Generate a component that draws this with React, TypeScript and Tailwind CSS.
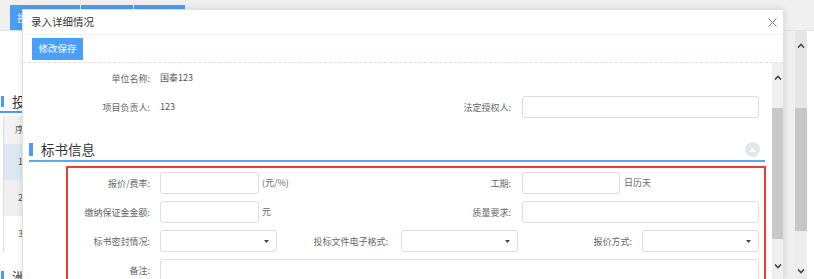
import React from 'react';

const Chevron = ({ up }: { up?: boolean }) => (
  <svg width="8" height="5" viewBox="0 0 8 5">
    <polyline
      points={up ? '1,4.5 4,1.5 7,4.5' : '1,0.5 4,3.5 7,0.5'}
      fill="none"
      stroke="#4a4a4a"
      strokeWidth="1.7"
    />
  </svg>
);

const Label = ({ className, children }: { className: string; children: React.ReactNode }) => (
  <div className={`shrink-0 text-right text-[9px] leading-none text-[#666] ${className}`}>{children}</div>
);

const TextInput = ({ className }: { className: string }) => (
  <div className={`shrink-0 h-[22px] rounded-[3px] border border-[#dcdcdc] bg-white ${className}`} />
);

const Select = ({ className }: { className: string }) => (
  <div className={`relative shrink-0 h-[22px] rounded-[3px] border border-[#dcdcdc] bg-white ${className}`}>
    {/* caret */}
    <svg className="absolute right-[7px] top-[9px]" width="5" height="3" viewBox="0 0 5 3">
      <polygon points="0,0 5,0 2.5,3" fill="#444" />
    </svg>
  </div>
);

const App = () => {
  return (
    <div className="relative w-[814px] h-[279px] overflow-hidden bg-white font-['Noto_Sans_CJK_SC','Noto_Sans',sans-serif]">
      {/* Background page */}
      <div className="flex h-full flex-col">
        <div className="flex h-[31px] shrink-0 items-end gap-[1px] border-b border-[#d5e4f3] bg-[#efefef] pl-[10px]">
          <div className="flex h-[25px] w-[70px] items-center bg-[#4a9cf4] pl-[7px] text-[10px] text-white">投标项目</div>
          <div className="h-[25px] w-[52px] bg-[#4a9cf4]" />
          <div className="h-[25px] w-[51px] bg-[#4a9cf4]" />
        </div>
        <div className="flex min-h-0 flex-1">
          <div className="flex-1 bg-white pt-[61px]">
            <div className="flex h-[21px] items-center border-b-2 border-[#4a9cf8]">
              <div className="ml-[1px] h-[11px] w-[3px] bg-[#4a9cf8]" />
              <span className="ml-[8px] text-[13.5px] text-[#333]">投标记录</span>
            </div>
            <div className="ml-[3px] mt-[3px] border-l border-[#dedede] text-[9px] text-[#555]">
              <div className="flex h-[28px] items-center bg-[#f2f2f2] pl-[11px]">序号</div>
              <div className="flex h-[36px] items-center bg-[#dde7f1] pl-[14px]">1</div>
              <div className="flex h-[36px] items-center bg-[#efefef] pl-[14px]">2</div>
              <div className="flex h-[36px] items-center bg-white pl-[14px]">3</div>
            </div>
            <div className="mt-[17px] flex h-[14px] items-center">
              <div className="ml-[1px] h-[11px] w-[3px] bg-[#4a9cf8]" />
              <span className="ml-[8px] text-[13.5px] text-[#333]">洲际</span>
            </div>
          </div>
          <div className="w-[11px] shrink-0 bg-[#efefef]" />
          {/* outer scrollbar */}
          <div className="flex w-[12px] shrink-0 flex-col bg-[#e6e6e6]">
            <div className="flex h-[28px] items-center justify-center">
              <Chevron up />
            </div>
            <div className="mt-[49px] h-[123px] bg-[#c6c6c6]" />
            <div className="flex-1 bg-[#ededed]" />
            <div className="flex h-[16px] items-center justify-center bg-[#ededed]">
              <Chevron />
            </div>
          </div>
          <div className="w-[7px] shrink-0 bg-white" />
        </div>
      </div>

      {/* Modal */}
      <div className="absolute left-[22px] top-[9px] flex h-[272px] w-[762px] flex-col border border-[#e0e0e0] bg-white shadow-[0_0_6px_rgba(0,0,0,0.12)]">
        <div className="flex h-[25px] shrink-0 items-center border-b border-[#f0f0f0] pl-[8px] pr-[6px]">
          <span className="text-[10.5px] text-[#333]">录入详细情况</span>
          <svg className="ml-auto" width="9" height="9" viewBox="0 0 9 9">
            <path d="M0.5 0.5 L8.5 8.5 M8.5 0.5 L0.5 8.5" stroke="#777" strokeWidth="1" />
          </svg>
        </div>
        <div className="flex h-[28px] shrink-0 items-center border-b border-dashed border-[#cfe1f3] pl-[9px]">
          <button className="flex h-[22px] w-[51px] items-center justify-center bg-[#4c9ff8] text-[9.5px] text-white">
            修改保存
          </button>
        </div>
        <div className="flex min-h-0 flex-1">
          <div className="min-w-0 flex-1 overflow-hidden pt-[4px]">
            <div className="flex h-[22px] items-center">
              <Label className="w-[127px]">单位名称:</Label>
              <span className="ml-[10px] text-[9px] text-[#555]">国泰123</span>
            </div>
            <div className="mt-[7px] flex h-[22px] items-center">
              <Label className="w-[127px]">项目负责人:</Label>
              <span className="ml-[10px] w-[240px] text-[9px] text-[#555]">123</span>
              <Label className="w-[111px]">法定授权人:</Label>
              <TextInput className="ml-[11px] w-[237px]" />
            </div>

            {/* section heading */}
            <div className="ml-[6px] mr-[7px] mt-[21px] flex h-[23px] items-center border-b-2 border-[#5ea6f5]">
              <div className="h-[13px] w-[4px] bg-[#4a9cf8]" />
              <span className="ml-[8px] text-[13.5px] text-[#333]">标书信息</span>
              <div className="ml-auto mr-[5px] flex h-[15px] w-[15px] items-center justify-center rounded-full bg-[#e1e5ec]">
                <svg width="7" height="4" viewBox="0 0 7 4">
                  <polygon points="0,4 7,4 3.5,0" fill="#fff" />
                </svg>
              </div>
            </div>

            <div className="ml-[43px] mr-[6px] mt-[4px] border-2 border-b-0 border-[#f03a3a] pt-[4px]">
              <div className="flex h-[22px] items-center">
                <div className="flex w-[332px] shrink-0 items-center">
                  <Label className="w-[82px]">报价/费率:</Label>
                  <TextInput className="ml-[10px] w-[99px]" />
                  <span className="ml-[3px] text-[9px] text-[#666]">(元/%)</span>
                </div>
                <Label className="w-[111px]">工期:</Label>
                <TextInput className="ml-[11px] w-[98px]" />
                <span className="ml-[4px] text-[9px] text-[#666]">日历天</span>
              </div>
              <div className="mt-[7px] flex h-[22px] items-center">
                <div className="flex w-[332px] shrink-0 items-center">
                  <Label className="w-[82px]">缴纳保证金金额:</Label>
                  <TextInput className="ml-[10px] w-[99px]" />
                  <span className="ml-[3px] text-[9px] text-[#666]">元</span>
                </div>
                <Label className="w-[111px]">质量要求:</Label>
                <TextInput className="ml-[11px] w-[237px]" />
              </div>
              <div className="mt-[7px] flex h-[22px] items-center">
                <Label className="w-[82px]">标书密封情况:</Label>
                <Select className="ml-[10px] w-[117px]" />
                <Label className="w-[111px]">投标文件电子格式:</Label>
                <Select className="ml-[13px] w-[117px]" />
                <Label className="w-[114px]">报价方式:</Label>
                <Select className="ml-[10px] w-[117px]" />
              </div>
              <div className="mt-[7px] flex items-start">
                <Label className="mt-[7px] w-[82px]">备注:</Label>
                <div className="ml-[10px] h-[40px] w-[599px] shrink-0 rounded-[3px] border border-[#dcdcdc]" />
              </div>
            </div>
          </div>
          {/* modal scrollbar */}
          <div className="flex w-[11px] shrink-0 flex-col bg-[#efefef]">
            <div className="flex h-[28px] items-center justify-center">
              <Chevron up />
            </div>
            <div className="mt-[17px] h-[131px] bg-[#c8c8c8]" />
            <div className="flex-1" />
            <div className="flex h-[28px] items-center justify-center">
              <Chevron />
            </div>
          </div>
        </div>
      </div>
    </div>
  );
};

export default App;
